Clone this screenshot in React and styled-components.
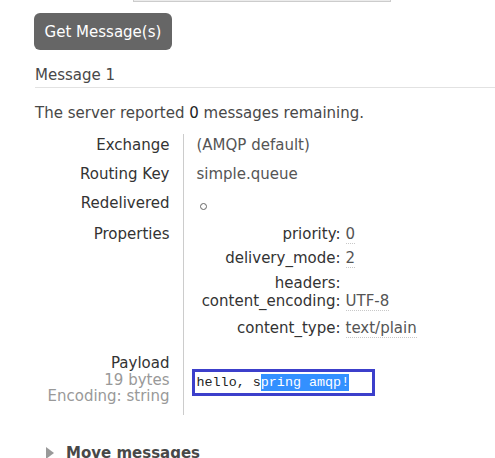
import React from "react";
import styled, { createGlobalStyle } from "styled-components";

const Global = createGlobalStyle`
  html, body { margin: 0; padding: 0; background: #fff; }
  body {
    font-family: "DejaVu Sans", Verdana, sans-serif;
    font-size: 15px;
    line-height: 18px;
    color: #484848;
    overflow: hidden;
  }
`;

const Page = styled.div`
  padding-left: 35px;
  width: 460px;
`;

const FormRow = styled.div`
  margin-top: -24px;
  padding-left: 98px;
  height: 26px;
`;

const TextInput = styled.div`
  width: 256px;
  height: 24px;
  border: 1px solid #ccc;
  box-shadow: inset 0 0 0 1px #ececec;
`;

const Button = styled.button`
  display: block;
  margin: 11px 0 0 -1px;
  width: 138px;
  height: 37px;
  border: none;
  border-radius: 6px;
  background: #666;
  color: #fff;
  font-family: "DejaVu Sans", Verdana, sans-serif;
  font-size: 15px;
  padding: 0;
`;

const SectionTitle = styled.h3`
  margin: 16px 0 0;
  font-size: 15px;
  line-height: 18px;
  font-weight: normal;
  color: #484848;
  padding-bottom: 3px;
  border-bottom: 1px solid #e2e2e2;
`;

const Summary = styled.p`
  margin: 16px 0 0;
`;

const Count = styled.span`
  color: #222;
`;

const Table = styled.table`
  margin-top: 12px;
  border-collapse: collapse;
`;

const Th = styled.th`
  text-align: right;
  font-weight: normal;
  color: #333;
  vertical-align: top;
  padding: ${(p) => p.$pt}px 13px ${(p) => p.$pb}px 0;
  border-right: 1px solid #ccc;
  width: 148px;
  box-sizing: border-box;
  white-space: nowrap;
`;

const Td = styled.td`
  vertical-align: top;
  color: #555;
  padding: ${(p) => p.$pt}px 0 ${(p) => p.$pb}px 13px;
`;

const Sub = styled.span`
  display: block;
  color: #999;
  line-height: 16px;
`;

const Circle = styled.span`
  display: inline-block;
  width: 5px;
  height: 5px;
  margin: 9px 0 0 3px;
  border: 1px solid #666;
  border-radius: 50%;
  vertical-align: top;
`;

const PropsTable = styled.table`
  border-collapse: collapse;
`;

const PropKey = styled.td`
  text-align: right;
  color: #333;
  padding: 0 5px 0 0;
  width: 144px;
  height: ${(p) => p.$h}px;
  vertical-align: top;
  white-space: nowrap;
`;

const PropVal = styled.td`
  padding: 0;
  vertical-align: top;
  color: #555;
`;

const Dotted = styled.span`
  border-bottom: 1px dotted #c8c8c8;
`;

const PayloadBox = styled.div`
  margin: 15px 0 0 -5px;
  width: 175px;
  height: 21px;
  border: 3px solid #3c3fcb;
  font-family: "Liberation Mono", "DejaVu Sans Mono", monospace;
  font-size: 13.4px;
  line-height: 21px;
  color: #222;
  padding-left: 2px;
  white-space: pre;
`;

const Selected = styled.span`
  background: #3390ff;
  color: #fff;
  padding: 1px 0;
`;

const Collapser = styled.div`
  margin-top: 29px;
  padding-left: 11px;
  display: flex;
  align-items: center;
  gap: 12px;
  font-weight: bold;
  color: #484848;
`;

const Triangle = styled.span`
  width: 0;
  height: 0;
  border-top: 6px solid transparent;
  border-bottom: 6px solid transparent;
  border-left: 8px solid #999;
`;

const props = [
  ["priority:", "0", 24],
  ["delivery_mode:", "2", 25],
  ["headers:", "", 16],
  ["content_encoding:", "UTF-8", 27],
  ["content_type:", "text/plain", 18],
];

export default function App() {
  return (
    <>
      <Global />
      <Page>
        <FormRow>
          <TextInput />
        </FormRow>
        <Button>Get Message(s)</Button>
        <SectionTitle>Message 1</SectionTitle>
        <Summary>
          The server reported <Count>0</Count> messages remaining.
        </Summary>
        <Table>
          <tbody>
            <tr>
              <Th $pt={2} $pb={9}>Exchange</Th>
              <Td $pt={2} $pb={9}>(AMQP default)</Td>
            </tr>
            <tr>
              <Th $pt={2} $pb={9}>Routing Key</Th>
              <Td $pt={2} $pb={9}>simple.queue</Td>
            </tr>
            <tr>
              <Th $pt={2} $pb={13}>Redelivered</Th>
              <Td $pt={2} $pb={13}>
                <Circle />
              </Td>
            </tr>
            <tr>
              <Th $pt={0} $pb={14}>Properties</Th>
              <Td $pt={0} $pb={14}>
                <PropsTable>
                  <tbody>
                    {props.map(([k, v, h]) => (
                      <tr key={k}>
                        <PropKey $h={h}>{k}</PropKey>
                        <PropVal>{v && <Dotted>{v}</Dotted>}</PropVal>
                      </tr>
                    ))}
                  </tbody>
                </PropsTable>
              </Td>
            </tr>
            <tr>
              <Th $pt={3} $pb={11}>
                Payload
                <Sub>19 bytes</Sub>
                <Sub>Encoding: string</Sub>
              </Th>
              <Td $pt={3} $pb={11}>
                <PayloadBox>
                  hello, s<Selected>pring amqp!</Selected>
                </PayloadBox>
              </Td>
            </tr>
          </tbody>
        </Table>
        <Collapser>
          <Triangle />
          Move messages
        </Collapser>
      </Page>
    </>
  );
}
